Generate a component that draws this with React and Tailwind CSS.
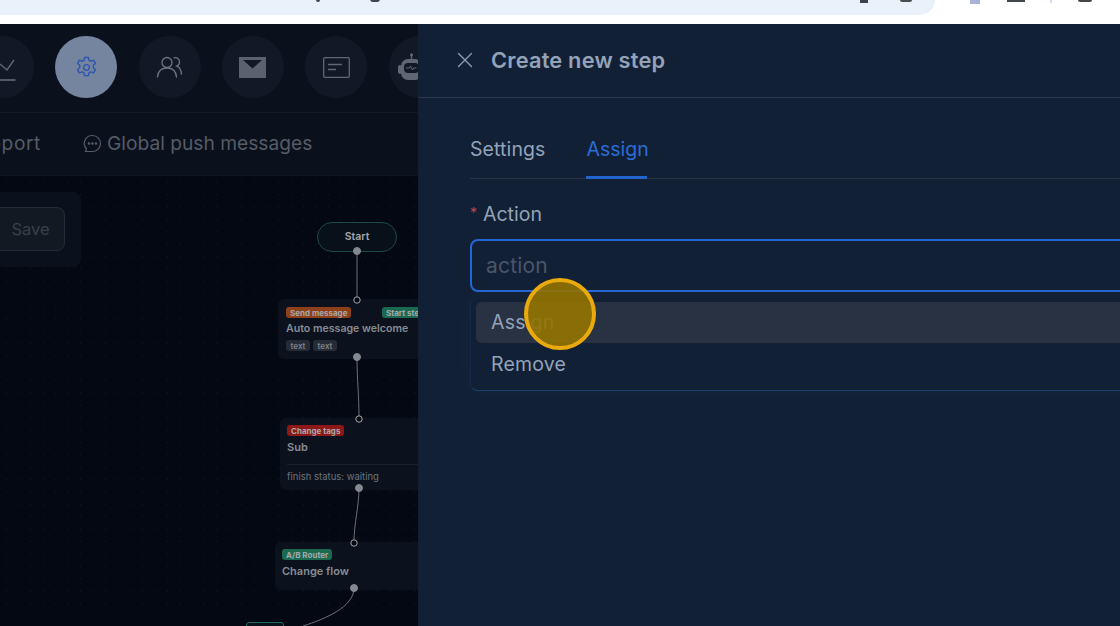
import React from "react";
import { X } from "lucide-react";

function NavCircle({ active, children }) {
  return (
    <div
      className={`w-[62px] h-[62px] shrink-0 rounded-full flex items-center justify-center ${
        active ? "bg-[#75859f]" : "bg-[#121926]"
      }`}
    >
      {children}
    </div>
  );
}

function Badge({ color, children }) {
  return (
    <span
      className={`h-[11px] px-1 rounded-[3px] flex items-center text-[8px] font-bold leading-none whitespace-nowrap text-[#a5a9ad] ${color}`}
    >
      {children}
    </span>
  );
}

function Handle({ x, y, filled }) {
  return (
    <circle
      cx={x}
      cy={y}
      r={filled ? 3.5 : 3.2}
      fill={filled ? "#84888f" : "#05090f"}
      stroke={filled ? "#84888f" : "#a4a7ab"}
      strokeWidth="1"
    />
  );
}

export default function App() {
  return (
    <div className="w-[1120px] h-[626px] overflow-hidden bg-white flex flex-col font-['Inter',sans-serif]">
      {/* Browser strip, cut off at the top */}
      <div className="h-[24px] shrink-0 relative bg-white">
        <div className="w-[935px] h-[15px] bg-[#eaf1fa] rounded-br-[18px] flex items-start">
          <div className="ml-[316px] mt-[-1px] w-[4px] h-[3px] bg-[#3f4347] rounded-b-sm" />
          <div className="ml-[50px] mt-[-1px] w-[10px] h-[3px] bg-[#3f4347] rounded-b-sm" />
          <div className="ml-[480px] w-[8px] h-[3px] bg-[#3f4347]" />
          <div className="ml-[32px] w-[12px] h-[2px] bg-[#4a4e52] rounded-b-sm" />
        </div>
        <div className="absolute top-0 left-[970px] w-[10px] h-[4px] bg-[#a8b2d6]" />
        <div className="absolute top-0 left-[1007px] w-[18px] h-[2px] bg-[#44484c]" />
        <div className="absolute top-0 left-[1050px] w-[2px] h-[3px] bg-[#d4dcf0]" />
        <div className="absolute top-0 left-[1078px] w-[14px] h-[2px] bg-[#44484c] rounded-b" />
      </div>

      <div className="flex-1 flex min-h-0">
        {/* Dimmed page behind the drawer */}
        <div className="w-[418px] shrink-0 flex flex-col overflow-hidden bg-[#050a14]">
          <div className="h-[89px] shrink-0 flex items-start pt-[12px] gap-[21.33px] ml-[-28px] bg-[#0a101c] border-b border-[#131a26]">
            <NavCircle>
              <svg width="62" height="62" viewBox="0 0 62 62" fill="none" stroke="#5b6472" strokeWidth="1.5">
                <path d="M28 28l7 6 7-10" />
                <path d="M22 44h21.500" strokeWidth="1.800" />
              </svg>
            </NavCircle>
            <NavCircle active>
              <svg width="23" height="23" viewBox="0 0 24 24" fill="none" stroke="#2f56b0" strokeWidth="1.500" strokeLinejoin="round">
                <path d="M10 1.500h4l.6 3 2 1 2.800-1.200 2 3.400-2.300 2v2.600l2.300 2-2 3.400-2.800-1.200-2 1-.6 3h-4l-.6-3-2-1-2.800 1.200-2-3.400 2.300-2v-2.600l-2.300-2 2-3.400 2.800 1.200 2-1z" />
                <circle cx="12" cy="12" r="3" />
              </svg>
            </NavCircle>
            <NavCircle>
              <svg width="28" height="24" viewBox="0 0 28 24" fill="none" stroke="#6b7482" strokeWidth="1.300" strokeLinecap="round">
                <circle cx="11" cy="7.500" r="5" />
                <path d="M1.500 22c.5-6 4-9 9.500-9s9 3 9.500 9" />
                <path d="M18 2.800c3-.8 5.500 1.200 5.500 4.200 0 2-1.200 3.500-2.800 4.200 3 1 4.500 4 4.800 8" />
              </svg>
            </NavCircle>
            <NavCircle>
              <svg width="27" height="21" viewBox="0 0 27 21">
                <path d="M0 0h27v21H0z" fill="#5a6270" />
                <path d="M4 3h19l-9.500 8.500z" fill="#121926" />
              </svg>
            </NavCircle>
            <NavCircle>
              <svg width="27" height="21" viewBox="0 0 27 21" fill="none" stroke="#5f6775" strokeWidth="1.300">
                <rect x=".7" y=".7" width="25.600" height="19.600" rx="1" />
                <path d="M5 7.500h14M5 12.500h8" />
              </svg>
            </NavCircle>
            <NavCircle>
              <svg className="mr-[16px]" width="27" height="28" viewBox="0 0 27 28" fill="none">
                <path d="M13.500 1v5" stroke="#5f6775" strokeWidth="1.500" />
                <circle cx="13.500" cy="1.700" r="1.500" fill="#5f6775" />
                <rect x="3" y="6" width="21" height="21" rx="7" fill="#5f6775" />
                <rect x="0" y="12" width="4" height="9" rx="2" fill="#5f6775" />
                <rect x="23" y="12" width="4" height="9" rx="2" fill="#5f6775" />
                <rect x="6" y="10" width="15" height="10" rx="4" fill="#121926" />
                <path d="M8 15h3.500l1-2 2 4 1-2h3" stroke="#5f6775" strokeWidth="1" />
              </svg>
            </NavCircle>
          </div>

          <div className="h-[63px] shrink-0 flex items-center bg-[#0a101c] border-b border-[#10161f] text-[19.200px] text-[#555c67] whitespace-nowrap">
            <div className="w-[41px] mt-[-2px] flex justify-end overflow-hidden tracking-[0.6px]">
              <span className="shrink-0">Support</span>
            </div>
            <svg className="ml-[42px] mr-[5px] mt-[-2px]" width="19" height="19" viewBox="0 0 19 19" fill="none" stroke="#555c67" strokeWidth="1.200">
              <path d="M9.500 1.500a8 8 0 0 1 0 16H2.500l1-2.500a8 8 0 0 1 6-13.500z" />
              <circle cx="6" cy="9.500" r=".7" fill="#555c67" />
              <circle cx="9.500" cy="9.500" r=".7" fill="#555c67" />
              <circle cx="13" cy="9.500" r=".7" fill="#555c67" />
            </svg>
            <span className="mt-[-2px]">Global push messages</span>
          </div>

          {/* Flow canvas */}
          <div className="flex-1 relative overflow-hidden bg-[#040812] bg-[radial-gradient(#161d29_0.7px,transparent_0.8px)] bg-[length:12.400px_12.400px]">
            <div className="absolute left-[-10px] top-[16px] w-[91px] h-[75px] rounded-lg bg-[#0b111c] pt-[15px]">
              <div className="w-[75px] h-[44px] rounded-lg border border-[#262c36] bg-[#131922] flex items-center justify-center pl-[6px] text-[16.500px] text-[#3a404a]">
                Save
              </div>
            </div>

            <div className="absolute left-[317px] top-[46px] w-[80px] h-[30px] rounded-full border border-[#1d4a47] bg-[#081019] flex items-center justify-center text-[10.500px] font-semibold text-[#a3a6aa]">
              Start
            </div>

            <div className="absolute left-[278px] top-[123px] w-[160px] h-[60px] rounded-md bg-[#0b121d]">
              <div className="absolute left-[8px] top-[8px]">
                <Badge color="bg-[#8f4019]">Send message</Badge>
              </div>
              <div className="absolute left-[104px] top-[8px]">
                <Badge color="bg-[#1b6a50]">Start step</Badge>
              </div>
              <div className="absolute left-[8px] top-[22px] text-[10.600px] font-semibold text-[#878c93] whitespace-nowrap">
                Auto message welcome
              </div>
              <div className="absolute left-[8px] top-[41px] flex gap-[3px]">
                <span className="h-[11px] w-[24px] rounded-[3px] bg-[#262c36] flex items-center justify-center text-[8px] font-semibold text-[#7d8289]">text</span>
                <span className="h-[11px] w-[24px] rounded-[3px] bg-[#262c36] flex items-center justify-center text-[8px] font-semibold text-[#7d8289]">text</span>
              </div>
            </div>

            <div className="absolute left-[280px] top-[242px] w-[160px] h-[72px] rounded-md bg-[#0b121d]">
              <div className="absolute left-[7px] top-[7px]">
                <Badge color="bg-[#8e1818]">Change tags</Badge>
              </div>
              <div className="absolute left-[7px] top-[21px] text-[11px] font-semibold text-[#878c93]">Sub</div>
              <div className="absolute left-[7px] right-0 top-[46px] border-t border-[#1a212c]" />
              <div className="absolute left-[7px] top-[52px] text-[9.500px] text-[#6f747b] whitespace-nowrap">finish status: waiting</div>
            </div>

            <div className="absolute left-[275px] top-[366px] w-[160px] h-[48px] rounded-md bg-[#0b121d]">
              <div className="absolute left-[7px] top-[7px]">
                <Badge color="bg-[#1b6a50]">A/B Router</Badge>
              </div>
              <div className="absolute left-[7px] top-[21px] text-[11px] font-semibold text-[#878c93] whitespace-nowrap">Change flow</div>
            </div>

            <div className="absolute left-[246px] top-[446px] w-[38px] h-[20px] rounded-[3px] border border-[#1d6a5a] bg-[#07121a]" />

            <svg className="absolute left-0 top-0" width="418" height="450" fill="none">
              <g stroke="#6c7076" strokeWidth="1">
                <path d="M357 75V124" />
                <path d="M357 181C357 206 359 216 359 243" />
                <path d="M359 312C359 331 354 346 354 367" />
                <path d="M354 412C354 431 325 443 303 450" />
              </g>
              <Handle x={357} y={75} filled />
              <Handle x={357} y={124} />
              <Handle x={357} y={181} filled />
              <Handle x={359} y={243} />
              <Handle x={359} y={312} filled />
              <Handle x={354} y={367} />
              <Handle x={354} y={412} filled />
            </svg>
          </div>
        </div>

        {/* Drawer */}
        <div className="flex-1 relative bg-[#122036] overflow-hidden">
          <div className="h-[74px] flex items-center border-b border-[#2c3749] pl-[34px]">
            <X size={26} strokeWidth={1.300} className="text-[#8d99ab] mt-[-2px]" />
            <h2 className="ml-[13px] text-[21.800px] font-semibold text-[#94a3b8] tracking-[0.2px]">Create new step</h2>
          </div>

          <div className="mx-[52px] mt-[30px] h-[51px] w-[700px] flex gap-[41px] border-b border-[#2c3442] text-[19.500px]">
            <div className="h-[51px] pt-[7px] text-[#94a3b8] tracking-[0.1px]">Settings</div>
            <div className="w-[61px] h-[51px] pt-[7px] text-[#2c6cd6] border-b-[3px] border-[#2163cf] whitespace-nowrap">Assign</div>
          </div>

          <div className="ml-[52px] mt-[22px] flex items-center h-[27px] text-[19.500px] text-[#94a3b8]">
            <span className="text-[#c0424f] text-[14px] mr-[6px] mt-[-5px]">*</span>
            Action
          </div>

          <div className="ml-[52px] mt-[11px] w-[700px] h-[53px] rounded-lg border-2 border-[#2467d4] flex items-center pl-[14px] text-[21px] text-[#4a5568] tracking-[0.2px]">
            action
          </div>

          <div className="ml-[52px] mt-[5px] w-[700px] h-[94px] rounded-lg border-b border-l border-b-[#1e3f72] border-l-[#17294a] bg-[#122036] p-[5px] shadow-[0_0_24px_rgba(255,255,255,0.03)] text-[19.500px] text-[#94a3b8]">
            <div className="h-[41px] pt-[1px] rounded-md bg-[#283243] flex items-center pl-[15px] tracking-[0.2px]">Assign</div>
            <div className="h-[42px] pt-[1px] flex items-center pl-[15px] tracking-[0.2px]">Remove</div>
          </div>

          {/* Click highlight from the recording */}
          <div className="absolute left-[106px] top-[254px] w-[72px] h-[72px] rounded-full border-[4px] border-[#eaaa0c] bg-[#947300]/90" />
        </div>
      </div>
    </div>
  );
}
